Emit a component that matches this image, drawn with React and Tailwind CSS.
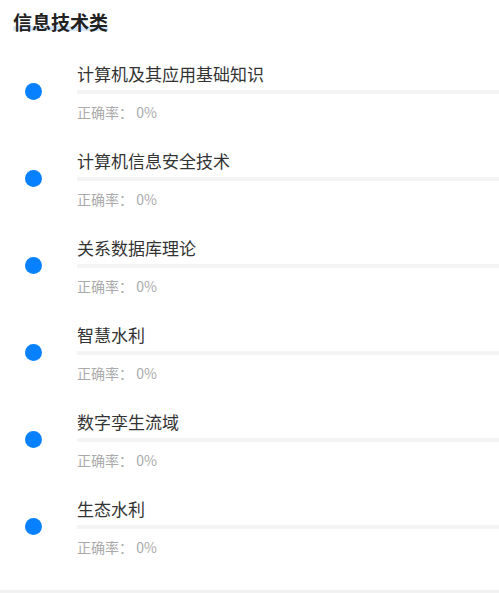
import React from "react";

const items = [
  "计算机及其应用基础知识",
  "计算机信息安全技术",
  "关系数据库理论",
  "智慧水利",
  "数字孪生流域",
  "生态水利",
];

const Row = ({ name }) => (
  <div className="flex">
    <div className="w-[77px] shrink-0">
      <div className="ml-[25px] mt-[21px] w-[17px] h-[17px] rounded-full bg-[#0781ff]"></div>
    </div>
    <div className="flex-1 min-w-0">
      <p className="text-[17px] leading-[24px] text-[#333]">{name}</p>
      <div className="mt-[4px] h-[4px] bg-[#f4f4f4]"></div>
      <p className="mt-[8px] text-[14px] leading-[20px] text-[#aaa]">正确率： 0%</p>
    </div>
  </div>
);

export default function App() {
  return (
    <div
      className="w-[499px] h-[593px] bg-white flex flex-col overflow-hidden"
      style={{ fontFamily: '"Noto Sans CJK SC", "Noto Sans", sans-serif' }}
    >
      <div className="pt-[8px] pl-[13px]">
        <h2 className="relative inline-block text-[19px] leading-[27px] font-bold text-[#222]">
          <span className="absolute left-0 right-0 bottom-[4px] h-[5px] bg-[#d3e6fa] rounded-full"></span>
          <span className="relative">信息技术类</span>
        </h2>
      </div>
      <div className="mt-[27px] flex flex-col gap-[27px]">
        {items.map((n) => (
          <Row key={n} name={n} />
        ))}
      </div>
      <div className="mt-auto h-[3px] bg-[#f2f2f2]"></div>
    </div>
  );
}
